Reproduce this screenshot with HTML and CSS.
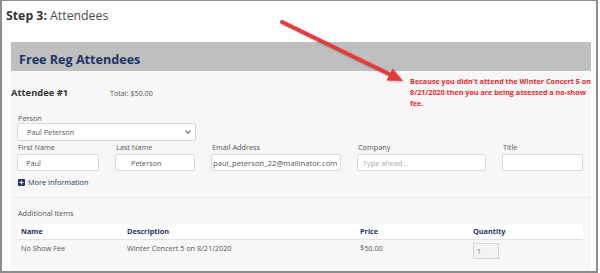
FILE: index.html
```html
<!DOCTYPE html>
<html lang="en">
<head>
  <meta charset="UTF-8" />
  <title>Step 3: Attendees</title>
  <link rel="stylesheet" href="styles.css">
</head>
<body>

  <div class="frame">
    <h1 class="step"><b>Step 3:</b> Attendees</h1>

    <div class="panel">
      <div class="panel-head">Free Reg Attendees</div>

      <div class="att-row">
        <div class="att-left">
          <h3>Attendee #1</h3>
          <span class="total">Total: $50.00</span>
        </div>
        <p class="note">Because you didn't attend the Winter Concert 5 on<br>8/21/2020 then you are being assessed a no-show<br>fee.</p>
      </div>

      <div class="form">
        <label class="lbl-person">Person</label>
        <div class="select-wrap">
          <select class="person">
            <option>Paul Peterson</option>
          </select>
          <svg class="chev" width="6" height="4" viewBox="0 0 6 4"><polyline points="0.6,0.6 3,3.2 5.4,0.6" fill="none" stroke="#666" stroke-width="1.1"/></svg>
        </div>

        <div class="fields">
          <div class="field f-first"><label>First Name</label><input type="text" value="Paul"></div>
          <div class="field f-last"><label>Last Name</label><input type="text" class="in-last" value="Peterson"></div>
          <div class="field f-email"><label>Email Address</label><input type="text" class="in-email" value="paul_peterson_22@mailinator.com"></div>
          <div class="field f-company"><label>Company</label><input type="text" class="in-company" placeholder="Type ahead..."></div>
          <div class="field f-title"><label>Title</label><input type="text"></div>
        </div>

        <a href="#" class="more">
          <svg width="7" height="7" viewBox="0 0 7 7"><rect width="7" height="7" rx="1" fill="#1d3566"/><path d="M3.5 1.5v4M1.5 3.5h4" stroke="#fff" stroke-width="1.2"/></svg>
          More Information
        </a>
      </div>

      <hr class="sep">

      <div class="items">
        <div class="items-title">Additional Items</div>
        <table>
          <thead>
            <tr>
              <th class="c-name">Name</th>
              <th class="c-desc">Description</th>
              <th class="c-price">Price</th>
              <th>Quantity</th>
            </tr>
          </thead>
          <tbody>
            <tr>
              <td>No Show Fee</td>
              <td>Winter Concert 5 on 8/21/2020</td>
              <td>$50.00</td>
              <td><input type="text" class="qty" value="1" disabled></td>
            </tr>
          </tbody>
        </table>
      </div>
    </div>

    <!-- callout arrow -->
    <svg class="arrow" width="600" height="273" viewBox="0 0 600 273">
      <line x1="282" y1="22" x2="391" y2="75" stroke="#e63b3b" stroke-width="4" stroke-linecap="round"/>
      <polygon points="403,81 386.5,80.5 392.5,68.5" fill="#e63b3b"/>
    </svg>
  </div>

</body>
</html>
```

FILE: styles.css
```css
body {
  margin: 0;
  font-family: "Open Sans", sans-serif;
  background: #fff;
}
.frame {
  position: relative;
  width: 598px;
  height: 273px;
  box-sizing: border-box;
  border: 2px solid #8c8c8c;
  border-top-width: 1px;
  display: flex;
  flex-direction: column;
  background: #fff;
}
.step {
  margin: 7px 0 0 4px;
  font-size: 12.3px;
  line-height: 16px;
  font-weight: normal;
  color: #4a4a4a;
}
.step b {
  color: #333;
}
.panel {
  margin: 18px 5px 0 9px;
  flex: 1;
  background: #f7f7f7;
}
.panel-head {
  background: #bfbfbf;
  height: 29px;
  box-sizing: border-box;
  padding: 9px 8px 0;
  font-size: 12.6px;
  line-height: 17px;
  font-weight: bold;
  color: #1d3566;
}
.att-row {
  display: flex;
  align-items: flex-start;
  justify-content: space-between;
}
.att-left {
  display: flex;
  align-items: baseline;
  margin-top: 15px;
}
.att-left h3 {
  margin: 0;
  width: 99px;
  font-size: 9.4px;
  line-height: 13px;
  color: #333;
}
.total {
  font-size: 7.2px;
  color: #555;
}
.note {
  margin: 5px 0 0;
  font-size: 7.2px;
  line-height: 11px;
  font-weight: bold;
  color: #e8282c;
  white-space: nowrap;
}
.form {
  padding: 4px 0 0 6px;
}
label {
  display: block;
  padding-left: 1px;
  font-size: 7.3px;
  line-height: 10px;
  color: #555;
}
.select-wrap {
  position: relative;
  width: 179px;
}
.person {
  appearance: none;
  -webkit-appearance: none;
  display: block;
  width: 100%;
  height: 18px;
  padding: 0 9px;
  border: 1px solid #d8d8d8;
  border-radius: 2px;
  background: #fff;
  font: 7.3px "Open Sans", sans-serif;
  color: #555;
}
.chev {
  position: absolute;
  right: 5px;
  top: 7px;
}
.fields {
  display: flex;
  gap: 16px;
  margin-top: 1px;
}
.field label {
  margin-bottom: 2px;
}
.field input {
  display: block;
  width: 100%;
  height: 17px;
  box-sizing: border-box;
  padding: 0 8px;
  border: 1px solid #dadada;
  border-radius: 2px;
  background: #fff;
  font: 7.3px "Open Sans", sans-serif;
  color: #555;
}
.field input::placeholder {
  color: #aaa;
}
.f-first { width: 82px; }
.f-last { width: 80px; }
.f-email { width: 130px; }
.f-company { width: 129px; }
.f-title { width: 81px; }
.in-last { padding-left: 15px !important; }
.in-email { padding: 0 0 0 1px !important; font-size: 7.7px !important; }
.in-company { padding-left: 5px !important; }
.more {
  display: flex;
  align-items: center;
  gap: 3px;
  margin-top: 6px;
  padding-left: 1px;
  font-size: 7.3px;
  line-height: 10px;
  color: #1d3566;
  text-decoration: none;
}
.sep {
  margin: 10px 0 0;
  border: 0;
  border-top: 1px solid #ececec;
}
.items {
  padding: 10px 8px 0 6px;
}
.items-title {
  padding-left: 1px;
  font-size: 7.3px;
  line-height: 10px;
  color: #555;
}
table {
  width: 100%;
  margin-top: 6px;
  border-collapse: collapse;
  font-size: 7.3px;
}
th {
  height: 15px;
  padding: 0 0 0 4px;
  background: #fff;
  border-bottom: 1px solid #e2e2e2;
  text-align: left;
  line-height: 15px;
  color: #1d3566;
  font-weight: bold;
}
.c-name { width: 102px; }
.c-desc { width: 229px; }
.c-price { width: 109px; }
td {
  padding: 3px 0 0 4px;
  vertical-align: top;
  line-height: 10px;
  color: #555;
}
.qty {
  display: block;
  width: 26px;
  height: 16px;
  box-sizing: border-box;
  padding: 0 0 0 3px;
  border: 1px solid #d6d6d6;
  background: #f3f3f3;
  font: 7.3px "Open Sans", sans-serif;
  color: #888;
}
.arrow {
  position: absolute;
  left: -2px;
  top: -1px;
  pointer-events: none;
  filter: drop-shadow(1px 1px 1px rgba(0,0,0,0.25));
}
```
